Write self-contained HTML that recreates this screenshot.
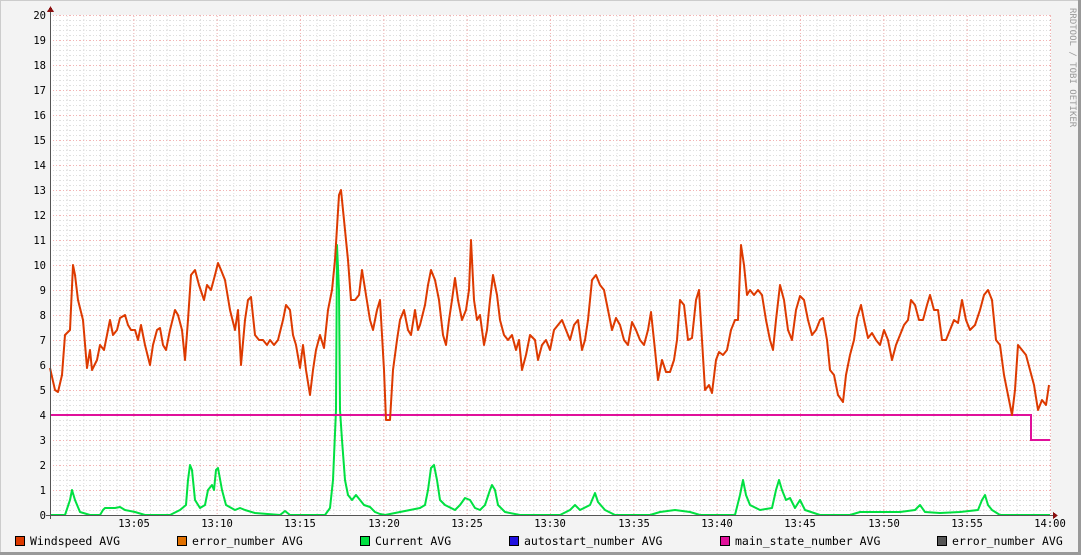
<!DOCTYPE html>
<html><head><meta charset="utf-8"><style>
html,body{margin:0;padding:0}
body{width:1081px;height:555px;overflow:hidden;background:#f3f3f3}
svg{display:block}
text{font-family:"DejaVu Sans Mono","Liberation Mono",monospace;font-size:10.5px;fill:#000}
.lg{font-size:11.5px}
</style></head><body>
<svg width="1081" height="555" viewBox="0 0 1081 555" shape-rendering="crispEdges">
<defs>
<pattern id="hmin" x="0" y="15" width="10" height="5" patternUnits="userSpaceOnUse"><line x1="0" y1="0.5" x2="10" y2="0.5" stroke="#dedede" stroke-width="1" stroke-dasharray="1,2"/></pattern>
<pattern id="vmin" x="50" y="0" width="16.667" height="10" patternUnits="userSpaceOnUse"><line x1="0.5" y1="0" x2="0.5" y2="10" stroke="#dedede" stroke-width="1" stroke-dasharray="1,2"/></pattern>
<pattern id="hmaj" x="0" y="15" width="10" height="25" patternUnits="userSpaceOnUse"><line x1="0" y1="0.5" x2="10" y2="0.5" stroke="#f2b4b4" stroke-width="1" stroke-dasharray="1,2"/></pattern>
<pattern id="vmaj" x="50" y="0" width="83.333" height="10" patternUnits="userSpaceOnUse"><line x1="0.5" y1="0" x2="0.5" y2="10" stroke="#f2b4b4" stroke-width="1" stroke-dasharray="1,2"/></pattern>
</defs>
<rect x="0" y="0" width="1081" height="555" fill="#f3f3f3"/>
<line x1="0" y1="0.5" x2="1081" y2="0.5" stroke="#ccc"/>
<line x1="0.5" y1="0" x2="0.5" y2="555" stroke="#ccc"/>
<line x1="1079.5" y1="0" x2="1079.5" y2="555" stroke="#999" stroke-width="3"/>
<line x1="0" y1="553.5" x2="1081" y2="553.5" stroke="#999" stroke-width="3"/>
<rect x="50" y="15" width="1001" height="500" fill="#fff"/>
<rect x="50" y="15" width="1001" height="500" fill="url(#hmin)"/>
<rect x="50" y="15" width="1001" height="500" fill="url(#vmin)"/>
<rect x="50" y="15" width="1001" height="500" fill="url(#hmaj)"/>
<rect x="50" y="15" width="1001" height="500" fill="url(#vmaj)"/>
<g text-anchor="end">
<text x="46" y="19">20</text><text x="46" y="44">19</text><text x="46" y="69">18</text><text x="46" y="94">17</text><text x="46" y="119">16</text><text x="46" y="144">15</text><text x="46" y="169">14</text><text x="46" y="194">13</text><text x="46" y="219">12</text><text x="46" y="244">11</text><text x="46" y="269">10</text><text x="46" y="294">9</text><text x="46" y="319">8</text><text x="46" y="344">7</text><text x="46" y="369">6</text><text x="46" y="394">5</text><text x="46" y="419">4</text><text x="46" y="444">3</text><text x="46" y="469">2</text><text x="46" y="494">1</text><text x="46" y="519">0</text>
</g>
<g text-anchor="middle">
<text x="134" y="527">13:05</text><text x="217" y="527">13:10</text><text x="300" y="527">13:15</text><text x="384" y="527">13:20</text><text x="467" y="527">13:25</text><text x="550" y="527">13:30</text><text x="634" y="527">13:35</text><text x="717" y="527">13:40</text><text x="800" y="527">13:45</text><text x="884" y="527">13:50</text><text x="967" y="527">13:55</text><text x="1050" y="527">14:00</text>
</g>
<g shape-rendering="auto">
<polyline fill="none" stroke="#00e040" stroke-width="2" stroke-linejoin="round" points="50,515 65,515 70,500 72,490 75,500 80,512 90,515 100,515 103,510 105,508 115,508 120,507 125,510 135,512 145,515 170,515 180,510 186,505 188,480 190,465 192,470 195,500 200,508 205,505 208,490 212,485 214,490 216,470 218,468 222,490 226,505 235,510 240,508 245,510 255,513 280,515 285,511 290,515 325,515 330,508 333,480 336,410 337,245 339,290 340,410 342,440 345,480 348,495 352,500 356,495 360,500 364,505 370,507 375,512 380,514 385,515 400,512 410,510 420,508 425,505 428,490 431,468 434,465 437,480 440,500 445,505 455,510 460,505 465,498 470,500 475,508 480,510 485,505 490,490 492,485 495,490 498,505 505,512 520,515 560,515 570,510 575,505 580,510 590,505 595,493 598,502 605,510 615,515 650,515 660,512 675,510 690,512 700,515 735,515 740,495 743,480 746,495 750,505 760,510 772,508 776,490 779,480 782,490 786,500 790,498 795,508 800,500 805,510 820,515 850,515 860,512 900,512 915,510 920,505 925,512 940,513 960,512 978,510 982,500 985,495 988,505 992,510 1000,515 1050,515"/>
<polyline fill="none" stroke="#e0109a" stroke-width="2" points="50,415 1031,415 1031,440 1050,440"/>
<polyline fill="none" stroke="#dd3a00" stroke-width="2" stroke-linejoin="round" points="50,368 55,390 58,392 62,375 65,335 70,330 73,265 75,275 78,300 83,320 87,368 90,350 92,370 97,360 100,345 104,350 106,340 110,320 113,335 117,330 120,318 125,315 128,325 131,330 135,330 138,340 141,325 145,345 150,365 153,345 157,330 160,328 163,345 166,350 170,330 175,310 178,315 182,330 185,360 188,320 191,275 195,270 199,285 204,300 207,285 211,290 215,275 218,263 221,270 225,280 230,310 235,330 238,310 241,365 245,320 248,300 251,297 255,335 259,340 263,340 267,345 270,340 274,345 278,340 283,320 286,305 290,310 293,335 296,345 300,368 303,345 306,370 310,395 313,370 316,350 320,335 324,348 328,310 332,290 335,260 339,195 341,190 345,230 348,260 351,300 355,300 359,295 362,270 366,295 370,320 373,330 377,310 380,300 384,370 386,420 390,420 393,370 397,340 400,320 404,310 408,330 411,335 415,310 418,330 420,325 425,305 428,285 431,270 435,280 439,300 443,335 446,345 449,320 452,300 455,278 458,300 462,320 466,310 469,290 471,240 474,300 477,320 480,315 484,345 487,330 490,300 493,275 497,295 500,320 504,335 508,340 512,335 516,350 519,340 522,370 526,355 530,335 535,340 538,360 542,345 546,340 550,350 554,330 558,325 562,320 566,330 570,340 574,325 578,320 582,350 585,340 588,320 592,280 596,275 600,285 604,290 608,310 612,330 616,318 620,325 624,340 628,345 632,322 636,330 640,340 644,345 648,330 651,312 655,350 658,380 662,360 666,372 670,372 674,360 677,340 680,300 684,305 688,340 692,338 696,300 699,290 702,340 705,390 709,385 712,393 716,360 719,352 723,355 727,350 731,330 735,320 738,320 741,245 744,265 747,295 750,290 754,295 758,290 762,295 766,320 770,340 773,350 776,320 780,285 784,300 788,330 792,340 796,310 800,296 804,300 808,320 812,335 816,330 820,320 823,318 827,340 830,370 834,375 838,395 843,402 846,375 850,355 854,340 857,318 861,305 864,320 868,338 872,333 876,340 880,345 884,330 888,340 892,360 896,345 900,335 904,325 908,320 911,300 915,305 919,320 923,320 927,305 930,295 934,310 938,310 942,340 946,340 950,330 954,320 958,323 962,300 966,320 970,330 975,325 980,310 984,295 988,290 992,300 996,340 1000,345 1004,375 1008,395 1012,415 1015,390 1018,345 1022,350 1026,355 1030,370 1034,385 1038,410 1042,400 1046,405 1049,385"/>
</g>
<line x1="46" y1="515.5" x2="1054" y2="515.5" stroke="#555"/>
<line x1="50.5" y1="519" x2="50.5" y2="11" stroke="#555"/>
<polygon points="1053,512 1058,515.5 1053,519" fill="#8b1010"/>
<polygon points="47,12 50.5,6 54,12" fill="#8b1010"/>
<text x="1070" y="8" transform="rotate(90 1070 8)" style="font-size:9px;fill:#999">RRDTOOL / TOBI OETIKER</text>
<g class="lg">
<rect x="15.5" y="536.5" width="9" height="9" fill="#dd3a00" stroke="#000"/><text class="lg" x="30" y="545">Windspeed AVG</text>
<rect x="177.5" y="536.5" width="9" height="9" fill="#e07000" stroke="#000"/><text class="lg" x="192" y="545">error_number AVG</text>
<rect x="360.5" y="536.5" width="9" height="9" fill="#00e040" stroke="#000"/><text class="lg" x="375" y="545">Current AVG</text>
<rect x="509.5" y="536.5" width="9" height="9" fill="#2010e0" stroke="#000"/><text class="lg" x="524" y="545">autostart_number AVG</text>
<rect x="720.5" y="536.5" width="9" height="9" fill="#e0109a" stroke="#000"/><text class="lg" x="735" y="545">main_state_number AVG</text>
<rect x="937.5" y="536.5" width="9" height="9" fill="#555" stroke="#000"/><text class="lg" x="952" y="545">error_number AVG</text>
</g>
</svg>
</body></html>
